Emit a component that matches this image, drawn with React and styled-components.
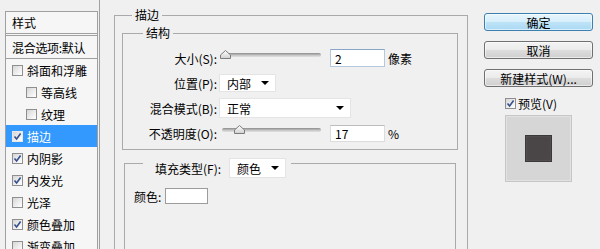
import React from 'react';
import styled, { createGlobalStyle } from 'styled-components';

const GlobalStyle = createGlobalStyle`
  html, body {
    margin: 0;
    padding: 0;
    background: #f0f0f0;
  }
  body {
    font-family: "Noto Sans CJK SC", "Liberation Sans", sans-serif;
    font-size: 12px;
    color: #000;
  }
`;

const Dialog = styled.div`
  display: flex;
  align-items: flex-start;
  width: 600px;
  height: 249px;
  overflow: hidden;
  background: #f0f0f0;
`;

/* ---------- left style list ---------- */

const StyleList = styled.div`
  flex-shrink: 0;
  width: 91px;
  margin: 11px 0 0 5px;
  border: 1px solid #a0a0a0;
  border-bottom: none;
  background: #f6f6f6;
`;

const ListHeader = styled.div`
  display: flex;
  align-items: center;
  height: 21px;
  padding-left: 6px;
  border-bottom: 1px solid #a0a0a0;
`;

const BlendRow = styled.div`
  display: flex;
  align-items: center;
  height: 22px;
  margin-top: 1px;
  padding-left: 6px;
  border-top: 1px solid #a0a0a0;
  border-bottom: 1px solid #a0a0a0;
  white-space: nowrap;
  overflow: hidden;
  letter-spacing: -0.3px;
`;

const ListRow = styled.div`
  display: flex;
  align-items: center;
  gap: 4px;
  height: 22px;
  padding-left: ${(p) => (p.$sub ? 20 : 6)}px;
  background: ${(p) => (p.$selected ? '#3399ff' : 'transparent')};
  color: ${(p) => (p.$selected ? '#fff' : '#000')};
  white-space: nowrap;
`;

const Box = styled.span`
  box-sizing: border-box;
  display: inline-flex;
  align-items: center;
  justify-content: center;
  flex-shrink: 0;
  width: 11px;
  height: 11px;
  border: 1px solid ${(p) => (p.$light ? '#e8e8e8' : '#8f8f8f')};
  background: linear-gradient(135deg, #d6d6d6, #f4f4f4 70%, #fff);
`;

const Check = ({ checked, light }) => (
  <Box $light={light}>
    {checked && (
      <svg width="9" height="9" viewBox="0 0 9 9">
        <path d="M1.5 4.5 L3.6 7 L7.6 1.5" fill="none" stroke="#36508c" strokeWidth="1.6" />
      </svg>
    )}
  </Box>
);

/* ---------- main pane ---------- */

const MainPane = styled.div`
  flex-shrink: 0;
  height: 249px;
  margin-left: 1px;
  padding: 8px 0 0 14px;
  border-left: 1px solid #a0a0a0;
`;

const Group = styled.fieldset`
  box-sizing: content-box;
  min-width: 0;
  width: 336px;
  height: 260px;
  margin: 0;
  padding: 4px 9px 0 7px;
  border: 1px solid #aaaaaa;
`;

const Legend = styled.legend`
  margin-left: ${(p) => p.$offset}px;
  padding: 0 3px;
  line-height: 14px;
  font-size: 12px;
`;

const InnerGroup = styled.fieldset`
  box-sizing: border-box;
  min-width: 0;
  width: 336px;
  margin: 0;
  padding: 7px 0 5px 1px;
  border: 1px solid #aaaaaa;
  display: flex;
  flex-direction: column;
  gap: 3px;
`;

const FieldRow = styled.div`
  display: grid;
  grid-template-columns: 93px auto;
  column-gap: 2px;
  align-items: center;
  height: 22px;
`;

const FieldLabel = styled.span`
  text-align: right;
  white-space: nowrap;
`;

const Controls = styled.div`
  display: flex;
  align-items: center;
`;

const Slider = styled.div`
  position: relative;
  flex-shrink: 0;
  width: 102px;
  height: 22px;
`;

const Track = styled.div`
  width: 99px;
  height: 4px;
  margin: 6px 0 0 3px;
  border-radius: 2px;
  background: linear-gradient(#8c8c8c, #c8c8c8 60%, #e2e2e2);
`;

const Thumb = styled.svg`
  position: absolute;
  top: 3px;
`;

const NumberInput = styled.div`
  box-sizing: border-box;
  width: 55px;
  height: ${(p) => (p.$focused ? 18 : 17)}px;
  margin-left: 9px;
  padding-left: 4px;
  display: flex;
  align-items: center;
  background: #fff;
  border: 1px solid ${(p) => (p.$focused ? '#b4c8de' : '#dcdcdc')};
  border-top-color: ${(p) => (p.$focused ? '#8aa6c6' : '#bdbdbd')};
`;

const Unit = styled.span`
  margin-left: 3px;
`;

const Select = styled.div`
  box-sizing: border-box;
  display: flex;
  align-items: center;
  width: ${(p) => p.$width}px;
  height: ${(p) => p.$height}px;
  padding: 0 6px 0 7px;
  background: #fff;
  border: 1px solid #e4e4e4;
  flex-shrink: 0;
`;

const Arrow = styled.span`
  margin-left: auto;
  width: 0;
  height: 0;
  border-left: 4px solid transparent;
  border-right: 4px solid transparent;
  border-top: 4px solid #000;
`;

const FillGroup = styled.fieldset`
  box-sizing: content-box;
  min-width: 0;
  width: 321px;
  height: 120px;
  margin: 8px 0 0 2px;
  padding: 20px 0 0 9px;
  border: 1px solid #aaaaaa;
`;

const FillLegend = styled.legend`
  display: flex;
  align-items: flex-start;
  height: 10px;
  margin-left: 9px;
  padding: 0 5px 0 12px;
`;

const LegendLabel = styled.span`
  display: flex;
  align-items: center;
  height: 20px;
  margin-right: 8px;
  white-space: nowrap;
`;

const ColorRow = styled.div`
  display: flex;
  align-items: center;
  gap: 4px;
  height: 16px;
`;

const Swatch = styled.span`
  box-sizing: border-box;
  width: 43px;
  height: 16px;
  background: #fff;
  border: 1px solid #9c9c9c;
`;

/* ---------- right column ---------- */

const SideColumn = styled.div`
  flex-shrink: 0;
  display: flex;
  flex-direction: column;
  width: 109px;
  margin-left: 16px;
  padding-top: 13px;
  gap: 10px;
`;

const Button = styled.div`
  box-sizing: border-box;
  display: flex;
  align-items: center;
  justify-content: center;
  height: 18px;
  border-radius: 3px;
  border: 1px solid ${(p) => (p.$primary ? '#3c7fb1' : '#707070')};
  background: ${(p) =>
    p.$primary
      ? 'linear-gradient(#e8f5fc, #d6eefb 50%, #bfe3f7 51%, #a9d9f4)'
      : 'linear-gradient(#f3f3f3, #ebebeb 50%, #dddddd 51%, #cfcfcf)'};
  box-shadow: inset 0 0 0 1px rgba(255, 255, 255, 0.55);
  white-space: nowrap;
`;

const PreviewToggle = styled.label`
  display: flex;
  align-items: center;
  gap: 2px;
  height: 12px;
  margin-top: 0;
  padding-left: 21px;
`;

const PreviewBox = styled.div`
  box-sizing: border-box;
  display: flex;
  align-items: center;
  justify-content: center;
  width: 67px;
  height: 67px;
  margin: -4px 0 0 21px;
  background: #d6d6d6;
  border: 1px solid #c6c6c6;
  box-shadow: inset 0 0 0 1px #e2e2e2;
`;

const PreviewSquare = styled.div`
  width: 27px;
  height: 27px;
  box-sizing: border-box;
  background: #4a4547;
  border: 1px solid #3c393a;
  box-shadow: inset 0 0 2px #6c6567;
`;

const styleItems = [
  { label: '斜面和浮雕', checked: false },
  { label: '等高线', checked: false, sub: true },
  { label: '纹理', checked: false, sub: true },
  { label: '描边', checked: true, selected: true },
  { label: '内阴影', checked: true },
  { label: '内发光', checked: true },
  { label: '光泽', checked: false },
  { label: '颜色叠加', checked: true },
  { label: '渐变叠加', checked: false },
];

const SliderControl = ({ value }) => (
  <Slider>
    <Track />
    <Thumb width="11" height="9" viewBox="0 0 11 9" style={{ left: 1 + value * 0.8 }}>
      <defs>
        <linearGradient id="thumbFill" x1="0" y1="0" x2="0" y2="1">
          <stop offset="0" stopColor="#ffffff" />
          <stop offset="1" stopColor="#d0d0d0" />
        </linearGradient>
      </defs>
      <path d="M5.5 0.5 L10.5 5 V8.5 H0.5 V5 Z" fill="url(#thumbFill)" stroke="#7c7c7c" />
    </Thumb>
  </Slider>
);

export default function App() {
  return (
    <>
      <GlobalStyle />
      <Dialog>
        <StyleList>
          <ListHeader>样式</ListHeader>
          <BlendRow>混合选项:默认</BlendRow>
          {styleItems.map((item) => (
            <ListRow key={item.label} $sub={item.sub} $selected={item.selected}>
              <Check checked={item.checked} light={item.selected} />
              {item.label}
            </ListRow>
          ))}
        </StyleList>

        <MainPane>
          <Group>
            <Legend $offset={10}>描边</Legend>
            <InnerGroup>
              <Legend $offset={19}>结构</Legend>
              <FieldRow>
                <FieldLabel>大小(S):</FieldLabel>
                <Controls>
                  <SliderControl value={0} />
                  <NumberInput $focused>2</NumberInput>
                  <Unit>像素</Unit>
                </Controls>
              </FieldRow>
              <FieldRow>
                <FieldLabel>位置(P):</FieldLabel>
                <Controls>
                  <Select $width={57} $height={18}>
                    内部
                    <Arrow />
                  </Select>
                </Controls>
              </FieldRow>
              <FieldRow>
                <FieldLabel>混合模式(B):</FieldLabel>
                <Controls>
                  <Select $width={132} $height={20}>
                    正常
                    <Arrow />
                  </Select>
                </Controls>
              </FieldRow>
              <FieldRow>
                <FieldLabel>不透明度(O):</FieldLabel>
                <Controls>
                  <SliderControl value={17} />
                  <NumberInput>17</NumberInput>
                  <Unit>%</Unit>
                </Controls>
              </FieldRow>
            </InnerGroup>

            <FillGroup>
              <FillLegend>
                <LegendLabel>填充类型(F):</LegendLabel>
                <Select $width={57} $height={20}>
                  颜色
                  <Arrow />
                </Select>
              </FillLegend>
              <ColorRow>
                颜色:
                <Swatch />
              </ColorRow>
            </FillGroup>
          </Group>
        </MainPane>

        <SideColumn>
          <Button $primary>确定</Button>
          <Button>取消</Button>
          <Button>新建样式(W)...</Button>
          <PreviewToggle>
            <Check checked />
            预览(V)
          </PreviewToggle>
          <PreviewBox>
            <PreviewSquare />
          </PreviewBox>
        </SideColumn>
      </Dialog>
    </>
  );
}
